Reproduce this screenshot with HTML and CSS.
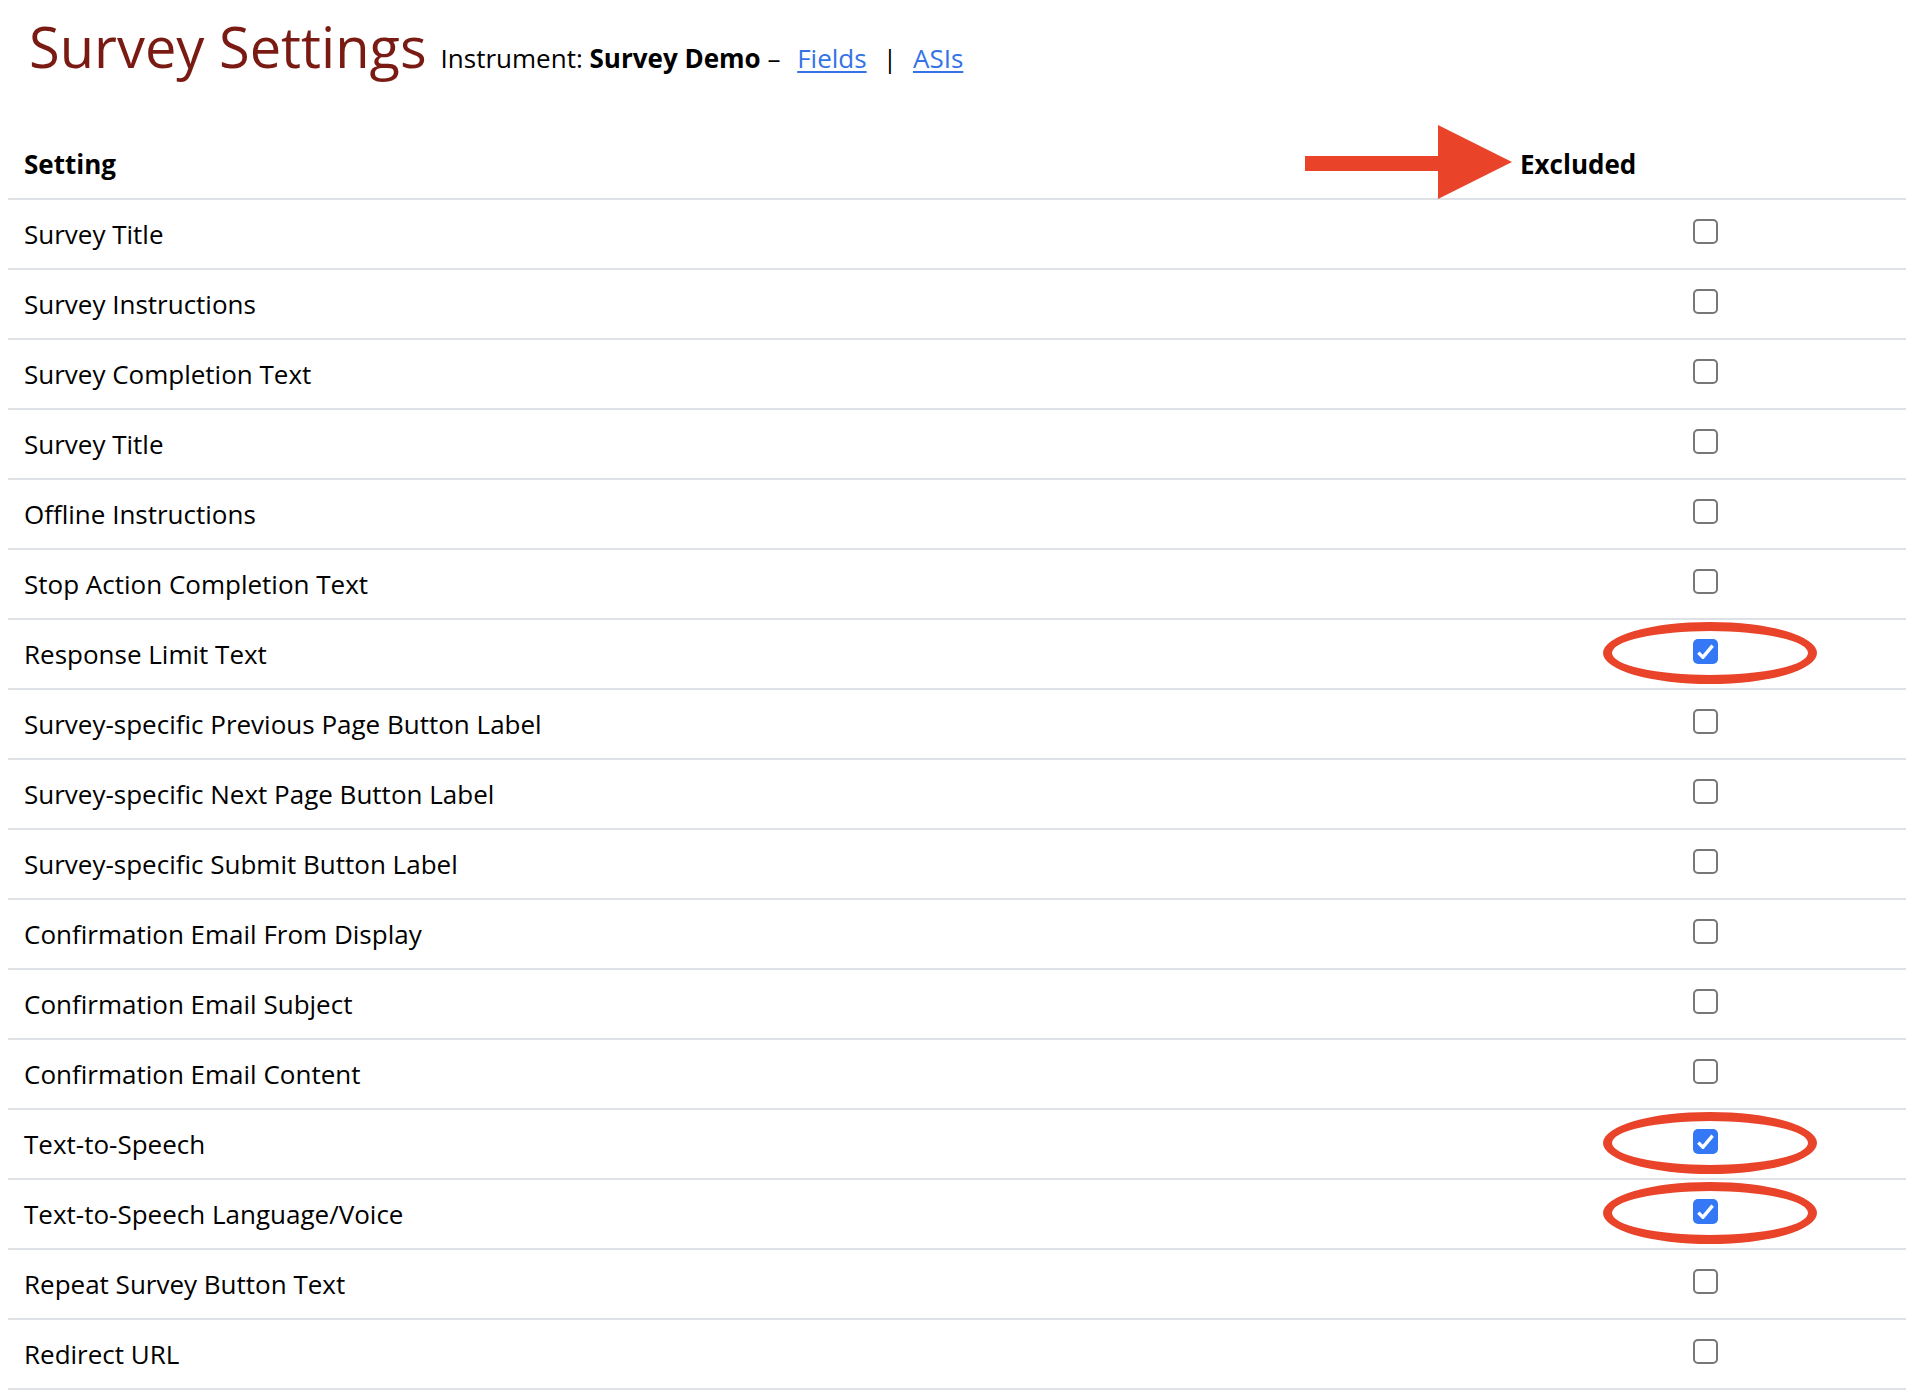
FILE: index.html
```html
<!DOCTYPE html>
<html lang="en">
<head>
<meta charset="utf-8">
<title>Survey Settings</title>
<link rel="stylesheet" href="styles.css">
</head>
<body>
<div class="page-head">
  <h1 class="title">Survey Settings</h1>
  <div class="instrument">Instrument: <b>Survey Demo</b> – <a class="lnk first" href="#">Fields</a><span class="sep">|</span><a class="lnk" href="#">ASIs</a></div>
</div>

<div class="settings">
  <div class="row head">
    <div class="cell name">Setting</div>
    <div class="cell excl-head">
      <svg class="arrow" width="207" height="74" viewBox="0 0 207 74"><rect x="0" y="31" width="134" height="15" fill="#e9432a"/><polygon points="133,0 207,37 133,74" fill="#e9432a"/></svg>
      Excluded
    </div>
  </div>

  <div class="row"><div class="cell name">Survey Title</div><div class="cell check"><span class="cb"></span></div></div>
  <div class="row"><div class="cell name">Survey Instructions</div><div class="cell check"><span class="cb"></span></div></div>
  <div class="row"><div class="cell name">Survey Completion Text</div><div class="cell check"><span class="cb"></span></div></div>
  <div class="row"><div class="cell name">Survey Title</div><div class="cell check"><span class="cb"></span></div></div>
  <div class="row"><div class="cell name">Offline Instructions</div><div class="cell check"><span class="cb"></span></div></div>
  <div class="row"><div class="cell name">Stop Action Completion Text</div><div class="cell check"><span class="cb"></span></div></div>
  <div class="row"><div class="cell name">Response Limit Text</div><div class="cell check"><span class="cb on"><svg width="25" height="25" viewBox="0 0 25 25"><path d="M5.3 13.6 L10 18.2 L19.6 6.6" fill="none" stroke="#fff" stroke-width="3.4" stroke-linejoin="round"/></svg></span><span class="ring"></span></div></div>
  <div class="row"><div class="cell name">Survey-specific Previous Page Button Label</div><div class="cell check"><span class="cb"></span></div></div>
  <div class="row"><div class="cell name">Survey-specific Next Page Button Label</div><div class="cell check"><span class="cb"></span></div></div>
  <div class="row"><div class="cell name">Survey-specific Submit Button Label</div><div class="cell check"><span class="cb"></span></div></div>
  <div class="row"><div class="cell name">Confirmation Email From Display</div><div class="cell check"><span class="cb"></span></div></div>
  <div class="row"><div class="cell name">Confirmation Email Subject</div><div class="cell check"><span class="cb"></span></div></div>
  <div class="row"><div class="cell name">Confirmation Email Content</div><div class="cell check"><span class="cb"></span></div></div>
  <div class="row"><div class="cell name">Text-to-Speech</div><div class="cell check"><span class="cb on"><svg width="25" height="25" viewBox="0 0 25 25"><path d="M5.3 13.6 L10 18.2 L19.6 6.6" fill="none" stroke="#fff" stroke-width="3.4" stroke-linejoin="round"/></svg></span><span class="ring"></span></div></div>
  <div class="row"><div class="cell name">Text-to-Speech Language/Voice</div><div class="cell check"><span class="cb on"><svg width="25" height="25" viewBox="0 0 25 25"><path d="M5.3 13.6 L10 18.2 L19.6 6.6" fill="none" stroke="#fff" stroke-width="3.4" stroke-linejoin="round"/></svg></span><span class="ring"></span></div></div>
  <div class="row"><div class="cell name">Repeat Survey Button Text</div><div class="cell check"><span class="cb"></span></div></div>
  <div class="row"><div class="cell name">Redirect URL</div><div class="cell check"><span class="cb"></span></div></div>
</div>
</body>
</html>
```

FILE: styles.css
```css
html, body {
  background: #ffffff;
}
body {
  margin: 8px;
  font-family: "Open Sans", "Liberation Sans", sans-serif;
  font-size: 26px;
  color: #000000;
}

.page-head {
  display: flex;
  align-items: baseline;
  gap: 14px;
  height: 122px;
  box-sizing: border-box;
  padding: 5px 0 0 21px;
}
.title {
  margin: 0;
  font-size: 56px;
  font-weight: 400;
  line-height: 1.2;
  color: #7a1b13;
}
.instrument {
  white-space: nowrap;
}
.instrument b {
  font-weight: 700;
}
.lnk {
  color: #3473e6;
  text-decoration: underline;
  text-underline-offset: 3px;
}
.lnk.first {
  margin-left: 10px;
}
.sep {
  margin: 0 16px;
}

.settings {
  display: flex;
  flex-direction: column;
}
.row {
  display: grid;
  grid-template-columns: 1fr 402px;
  height: 70px;
  box-sizing: border-box;
  border-bottom: 2px solid #dee2e6;
  align-items: center;
}
.cell {
  padding: 0 16px;
}
.head .cell {
  font-weight: 700;
}
.excl-head {
  position: relative;
  padding-left: 16px;
}
.arrow {
  position: absolute;
  left: -199px;
  top: 50%;
  margin-top: -39px;
}
.check {
  position: relative;
  height: 68px;
  display: flex;
  align-items: center;
  justify-content: center;
  padding: 0;
}
.cb {
  display: block;
  width: 25px;
  height: 25px;
  box-sizing: border-box;
  border: 2px solid #777777;
  border-radius: 5px;
  background: #ffffff;
  margin-bottom: 5px;
}
.cb.on {
  border: none;
  background: #3478f6;
}
.cb svg {
  display: block;
}
.ring {
  position: absolute;
  left: 99px;
  top: 2px;
  width: 214px;
  height: 62px;
  box-sizing: border-box;
  border: 9px solid #e9432a;
  border-radius: 50%;
}
```
